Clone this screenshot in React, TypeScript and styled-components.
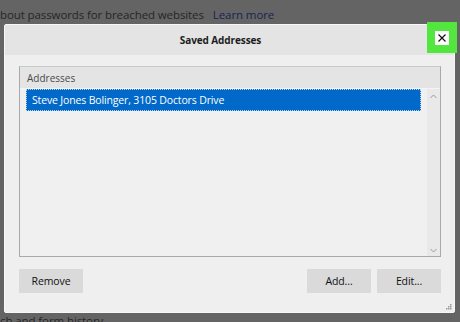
import styled, { createGlobalStyle } from 'styled-components';

const GlobalStyle = createGlobalStyle`
  html, body {
    margin: 0;
    padding: 0;
    background: #646464;
    overflow: hidden;
  }
  body {
    font-family: "Open Sans", "Noto Sans", Arial, sans-serif;
  }
`;

const Page = styled.div`
  width: 460px;
  height: 322px;
  display: flex;
  flex-direction: column;
  overflow: hidden;
`;

const PageLine = styled.div<{ top: number; lh: number }>`
  height: ${({ top }) => 24 - top}px;
  padding-top: ${({ top }) => top}px;
  display: flex;
  align-items: flex-start;
  gap: 9px;
  font-size: 11.5px;
  line-height: ${({ lh }) => lh}px;
  color: #262626;
  white-space: nowrap;
  letter-spacing: -0.1px;
`;

const PageLink = styled.span`
  color: #18254f;
`;

const Dialog = styled.div`
  position: relative;
  margin-left: 4px;
  width: 449px;
  height: 287px;
  background: #efefef;
  border: 1px solid #f7f7f7;
  border-radius: 2px;
  display: flex;
  flex-direction: column;
  flex-shrink: 0;
`;

const TitleBar = styled.div`
  height: 30px;
  background: #e4e4e4;
  display: flex;
  align-items: center;
  justify-content: center;
  font-size: 10px;
  font-weight: 700;
  letter-spacing: -0.1px;
  color: #1c1c1c;
  padding-right: 18px;
`;

const CloseHighlight = styled.div`
  position: absolute;
  top: -3px;
  right: -3px;
  width: 30px;
  height: 31px;
  background: #52e63f;
  display: flex;
  align-items: center;
  justify-content: center;
`;

const CloseBox = styled.div`
  width: 14px;
  height: 14px;
  background: #ffffff;
  display: flex;
  align-items: center;
  justify-content: center;
`;

const Body = styled.div`
  flex: 1;
  display: flex;
  flex-direction: column;
  padding: 11px 13px 0 14px;
`;

const ListBox = styled.div`
  height: 189px;
  border: 1px solid #a9a9a9;
  border-top-color: #c8c8c8;
  display: flex;
  flex-direction: column;
`;

const ListHeader = styled.div`
  height: 21px;
  background: #e4e4e4;
  border-bottom: 1px solid #f4f4f4;
  display: flex;
  align-items: center;
  padding-left: 7px;
  font-size: 10px;
  color: #4a4a4a;
`;

const ListArea = styled.div`
  flex: 1;
  display: flex;
  background: #f0f0f0;
`;

const Rows = styled.div`
  flex: 1;
  padding: 0 6px 0 6px;
`;

const Row = styled.div<{ selected?: boolean }>`
  height: 22px;
  box-sizing: border-box;
  display: flex;
  align-items: center;
  padding-left: 5px;
  font-size: 10.5px;
  letter-spacing: -0.15px;
  color: ${({ selected }) => (selected ? '#ffffff' : '#222')};
  background: ${({ selected }) => (selected ? '#0069c9' : 'transparent')};
  border: 1px dotted ${({ selected }) => (selected ? '#b9d3ee' : 'transparent')};
`;

const ScrollBar = styled.div`
  width: 13px;
  background: #e9e9e9;
  display: flex;
  flex-direction: column;
  justify-content: space-between;
  align-items: center;
  padding: 5px 0 3px;
`;

const Buttons = styled.div`
  display: flex;
  align-items: center;
  gap: 6px;
  margin-top: 12px;
`;

const Spacer = styled.div`
  flex: 1;
`;

const Button = styled.div`
  width: 64px;
  height: 24px;
  background: #dadada;
  display: flex;
  align-items: center;
  justify-content: center;
  font-size: 10.5px;
  letter-spacing: -0.1px;
  color: #111;
`;

const Grip = styled.div`
  position: absolute;
  right: 2px;
  bottom: 2px;
  display: flex;
`;

const Arrow = ({ up }: { up?: boolean }) => (
  <svg width="7" height="5" viewBox="0 0 7 5">
    <path
      d={up ? 'M0.5 4 L3.5 1 L6.5 4' : 'M0.5 1 L3.5 4 L6.5 1'}
      fill="none"
      stroke="#9a9a9a"
      strokeWidth="1"
    />
  </svg>
);

export default function App() {
  return (
    <>
      <GlobalStyle />
      <Page>
        <PageLine top={6} lh={18}>
          <span>bout passwords for breached websites</span>
          <PageLink>Learn more</PageLink>
        </PageLine>
        <Dialog>
          <TitleBar>Saved Addresses</TitleBar>
          <CloseHighlight>
            <CloseBox>
              <svg width="10" height="10" viewBox="0 0 10 10">
                <path d="M1.5 1.5 L8.5 8.5 M8.5 1.5 L1.5 8.5" stroke="#111" strokeWidth="1.2" />
              </svg>
            </CloseBox>
          </CloseHighlight>
          <Body>
            <ListBox>
              <ListHeader>Addresses</ListHeader>
              <ListArea>
                <Rows>
                  <Row selected>Steve Jones Bolinger, 3105 Doctors Drive</Row>
                </Rows>
                <ScrollBar>
                  <Arrow up />
                  <Arrow />
                </ScrollBar>
              </ListArea>
            </ListBox>
            <Buttons>
              <Button>Remove</Button>
              <Spacer />
              <Button>Add...</Button>
              <Button>Edit...</Button>
            </Buttons>
          </Body>
          <Grip>
            <svg width="6" height="6" viewBox="0 0 6 6">
              <rect x="4" y="0" width="1.5" height="1.5" fill="#9a9a9a" />
              <rect x="2" y="2" width="1.5" height="1.5" fill="#9a9a9a" />
              <rect x="4" y="2" width="1.5" height="1.5" fill="#9a9a9a" />
              <rect x="0" y="4" width="1.5" height="1.5" fill="#9a9a9a" />
              <rect x="2" y="4" width="1.5" height="1.5" fill="#9a9a9a" />
              <rect x="4" y="4" width="1.5" height="1.5" fill="#9a9a9a" />
            </svg>
          </Grip>
        </Dialog>
        <PageLine top={0} lh={16}>
          <span>ch and form history</span>
        </PageLine>
      </Page>
    </>
  );
}
